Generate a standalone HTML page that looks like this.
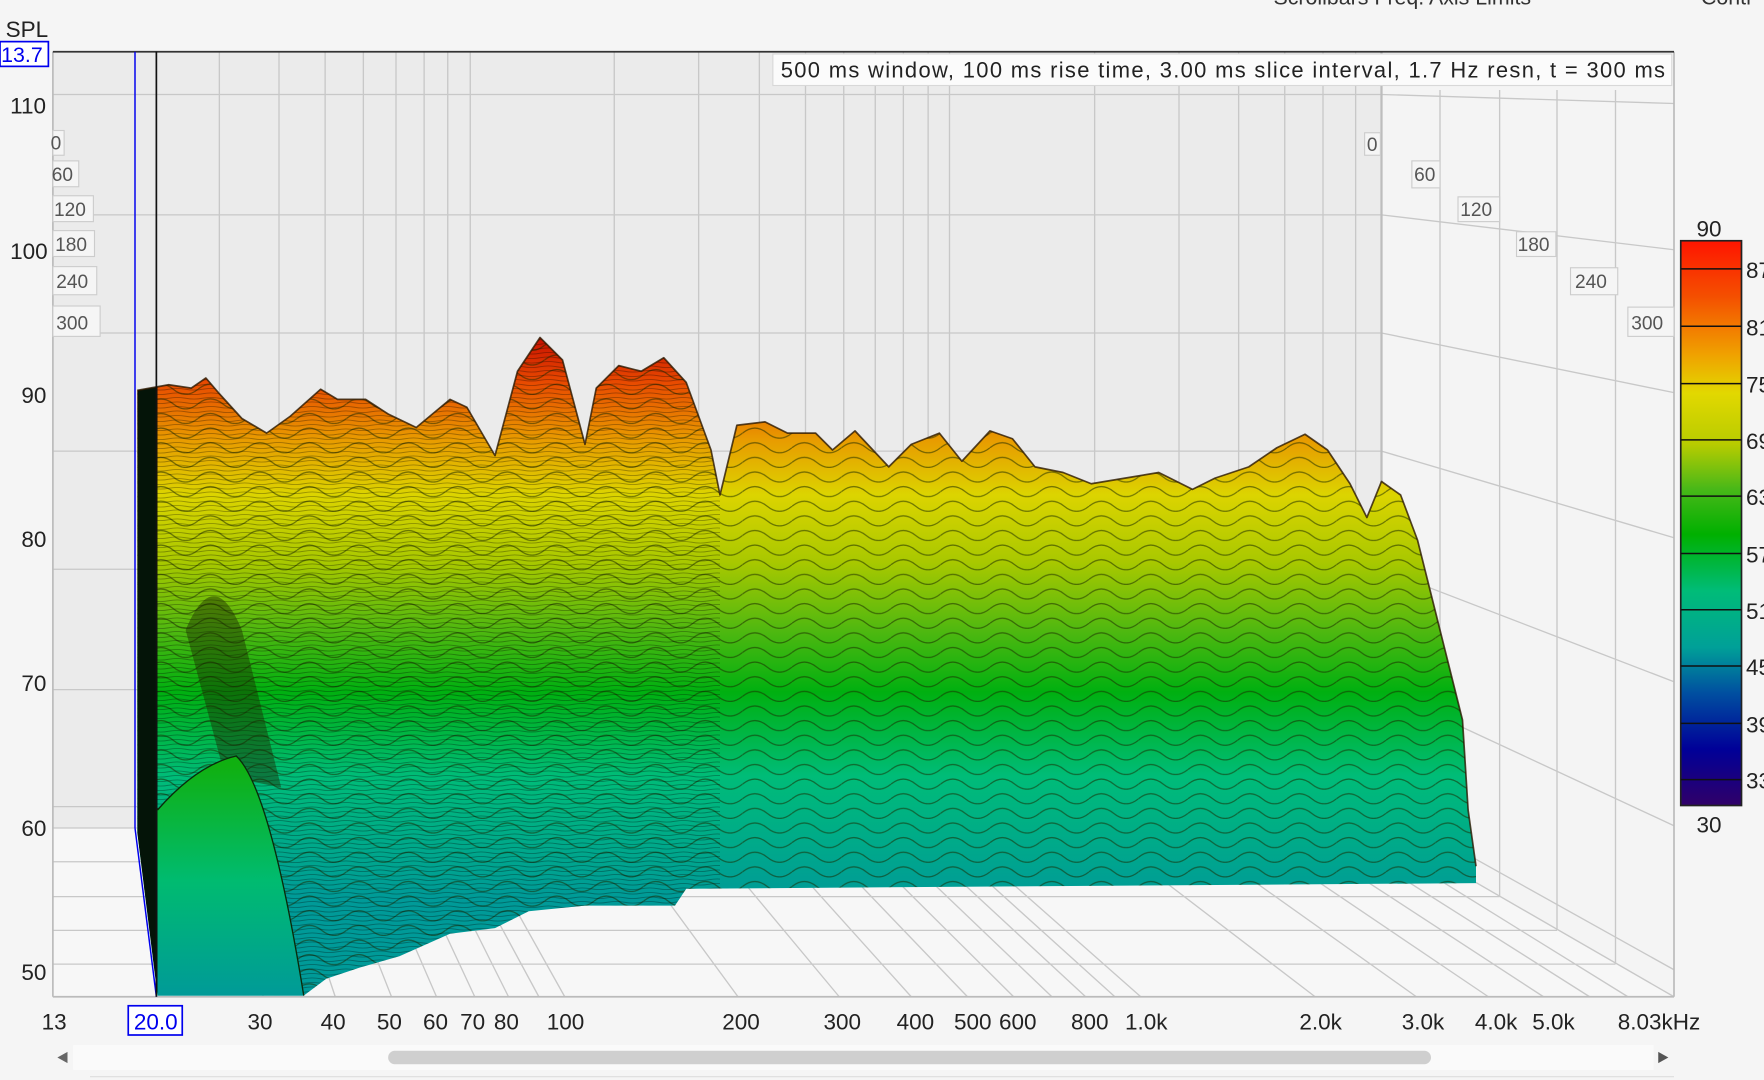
<!DOCTYPE html>
<html><head><meta charset="utf-8"><style>
html,body{margin:0;padding:0;background:#f5f5f5;overflow:hidden}
svg{display:block}
text{font-family:"Liberation Sans",sans-serif}
</style></head><body>
<svg width="1764" height="1080" viewBox="0 0 1568 960" xmlns="http://www.w3.org/2000/svg">
<defs>
<linearGradient id="surf" gradientUnits="userSpaceOnUse" x1="0" y1="300" x2="0" y2="800">
<stop offset="0" stop-color="#c81000"/><stop offset="0.08" stop-color="#e84a00"/>
<stop offset="0.18" stop-color="#e89a00"/><stop offset="0.28" stop-color="#dcd400"/>
<stop offset="0.4" stop-color="#a8c800"/><stop offset="0.52" stop-color="#50b810"/>
<stop offset="0.63" stop-color="#00b010"/><stop offset="0.78" stop-color="#00bc78"/>
<stop offset="1" stop-color="#009a98"/></linearGradient>
<linearGradient id="hill" gradientUnits="userSpaceOnUse" x1="0" y1="680" x2="0" y2="886">
<stop offset="0" stop-color="#10b010"/><stop offset="0.5" stop-color="#00bb70"/><stop offset="1" stop-color="#009a98"/></linearGradient>
<linearGradient id="cb" x1="0" y1="0" x2="0" y2="1">
<stop offset="0" stop-color="#ff1500"/><stop offset="0.1" stop-color="#f45000"/>
<stop offset="0.2" stop-color="#f0a000"/><stop offset="0.27" stop-color="#e2d800"/>
<stop offset="0.36" stop-color="#b8cc00"/><stop offset="0.44" stop-color="#48b818"/>
<stop offset="0.52" stop-color="#00b000"/><stop offset="0.62" stop-color="#00bc78"/>
<stop offset="0.72" stop-color="#00a098"/><stop offset="0.8" stop-color="#0050a0"/>
<stop offset="0.9" stop-color="#000098"/><stop offset="1" stop-color="#300068"/></linearGradient>
<pattern id="wave" patternUnits="userSpaceOnUse" width="44" height="13">
<path d="M0,8 Q11,-1 22,8 T44,8" fill="none" stroke="#1a2a00" stroke-opacity="0.55" stroke-width="1.1"/></pattern>
<pattern id="wave2" patternUnits="userSpaceOnUse" width="30" height="4">
<path d="M0,2 Q7.5,0.5 15,2 T30,2" fill="none" stroke="#000" stroke-opacity="0.5" stroke-width="0.8"/></pattern>
<clipPath id="sil"><path id="silp" d="M122,347 L150,342 L170,345 L183,336 L195,350 L215,372 L237,385 L258,370 L285,346 L300,355 L325,355 L345,368 L370,380 L400,355 L415,362 L440,405 L460,330 L480,300 L500,320 L520,395 L530,345 L550,325 L570,330 L590,318 L610,340 L632,400 L640,440 L655,378 L680,375 L700,385 L725,385 L740,400 L760,383 L790,415 L810,395 L835,385 L855,410 L880,383 L900,390 L920,415 L945,420 L970,430 L1000,425 L1030,420 L1060,435 L1080,425 L1110,415 L1135,398 L1160,386 L1180,400 L1200,430 L1215,460 L1228,428 L1245,440 L1260,480 L1275,540 L1290,600 L1300,640 L1305,720 L1312,770 L1312,785 L610,790 L600,805 L520,805 L470,810 L440,825 L400,830 L355,850 L320,860 L290,870 L270,885 L140,885 L122,740 Z"/></clipPath>
</defs>

<text x="1132" y="4" font-size="19" fill="#333">Scrollbars   Freq. Axis   Limits</text>
<text x="1512" y="4" font-size="19" fill="#333">Contr</text>

<rect x="47" y="46" width="1181" height="690" fill="#ebebeb"/>
<polygon points="1228,46 1488,46 1488,886 1228,736" fill="#f4f4f4"/>
<polygon points="47,736 1228,736 1488,886 47,886" fill="#f7f7f7"/>

<g stroke="#c8c8c8" stroke-width="1.2" fill="none">
<path d="M47,84H1228M47,191H1228M47,296H1228M47,401H1228M47,506H1228M47,613H1228M47,717H1228M47,736H1228"/>
<path d="M1228,84L1488,92M1228,191L1488,222M1228,296L1488,349M1228,401L1488,478M1228,506L1488,606M1228,613L1488,734M1228,717L1488,862"/>
<path d="M47,766H1280M47,797H1333M47,827H1384M47,857H1436M1228,736L1488,886"/>
<path d="M1280,80V766M1333,80V797M1384,80V827M1436,80V857"/>
<path d="M195,46V736M248,46V736M289,46V736M323,46V736M352,46V736M377,46V736M398,46V736M418,46V736M546,46V736M621,46V736M675,46V736M716,46V736M750,46V736M778,46V736M803,46V736M825,46V736M844,46V736M973,46V736M1048,46V736M1101,46V736M1142,46V736M1176,46V736M1205,46V736M1228,46V736"/>
<path d="M195,736L234,886M248,736L298,886M289,736L348,886M323,736L388,886M352,736L422,886M377,736L452,886M398,736L479,886M418,736L502,886M546,736L656,886M621,736L746,886M675,736L810,886M716,736L860,886M750,736L901,886M778,736L935,886M803,736L965,886M825,736L991,886M844,736L1014,886M973,736L1169,886M1048,736L1259,886M1101,736L1323,886M1142,736L1372,886M1176,736L1413,886M1205,736L1447,886"/>
</g>
<line x1="1228" y1="46" x2="1228" y2="736" stroke="#bdbdbd" stroke-width="2"/>
<line x1="1488" y1="46" x2="1488" y2="886" stroke="#bbb" stroke-width="1.5"/>
<line x1="47" y1="46" x2="47" y2="886" stroke="#bbb" stroke-width="1.5"/>
<line x1="47" y1="886" x2="1488" y2="886" stroke="#bbb" stroke-width="1.5"/>
<line x1="47" y1="46" x2="1488" y2="46" stroke="#333" stroke-width="1.5"/>

<use href="#silp" fill="url(#surf)"/>
<g clip-path="url(#sil)">
<rect x="100" y="290" width="1230" height="600" fill="url(#wave)"/>
<rect x="120" y="290" width="520" height="600" fill="url(#wave2)" opacity="0.6"/>
<polygon points="122,330 140,330 140,885 122,740" fill="#041408"/>
<path d="M165,560 Q190,500 215,560 L250,700 L200,690 Z" fill="#1a2a00" opacity="0.45"/>
</g>
<path d="M122,347 L150,342 L170,345 L183,336 L195,350 L215,372 L237,385 L258,370 L285,346 L300,355 L325,355 L345,368 L370,380 L400,355 L415,362 L440,405 L460,330 L480,300 L500,320 L520,395 L530,345 L550,325 L570,330 L590,318 L610,340 L632,400 L640,440 L655,378 L680,375 L700,385 L725,385 L740,400 L760,383 L790,415 L810,395 L835,385 L855,410 L880,383 L900,390 L920,415 L945,420 L970,430 L1000,425 L1030,420 L1060,435 L1080,425 L1110,415 L1135,398 L1160,386 L1180,400 L1200,430 L1215,460 L1228,428 L1245,440 L1260,480 L1275,540 L1290,600 L1300,640 L1305,720 L1312,770" fill="none" stroke="#2a1800" stroke-width="1.5" stroke-linejoin="round" opacity="0.8"/>
<path d="M140,885 L140,720 Q175,680 210,672 Q240,700 270,885 Z" fill="url(#hill)"/>
<path d="M140,720 Q175,680 210,672 Q240,700 270,885" fill="none" stroke="#0a2a0a" stroke-width="1.2"/>

<line x1="120" y1="46" x2="120" y2="736" stroke="#0000ee" stroke-width="1.3"/>
<line x1="120" y1="736" x2="139" y2="886" stroke="#0000ee" stroke-width="1.3"/>
<line x1="139" y1="46" x2="139" y2="886" stroke="#111" stroke-width="1.5"/>

<rect x="687" y="48" width="799" height="28" fill="#fbfbfb" stroke="#d8d8d8"/>
<text x="694" y="69" font-size="19.5" fill="#222" textLength="786">500 ms window, 100 ms rise time, 3.00 ms slice interval, 1.7 Hz resn, t = 300 ms</text>

<g font-size="17" fill="#555" stroke="none">
<rect x="47" y="116" width="10" height="22" fill="#f5f5f5" stroke="#ccc"/><text x="45" y="133">0</text>
<rect x="47" y="143" width="23" height="23" fill="#f5f5f5" stroke="#ccc"/><text x="46" y="161">60</text>
<rect x="47" y="174" width="36" height="23" fill="#f5f5f5" stroke="#ccc"/><text x="48" y="192">120</text>
<rect x="47" y="205" width="37" height="23" fill="#f5f5f5" stroke="#ccc"/><text x="49" y="223">180</text>
<rect x="47" y="237" width="39" height="25" fill="#f5f5f5" stroke="#ccc"/><text x="50" y="256">240</text>
<rect x="47" y="272" width="42" height="27" fill="#f5f5f5" stroke="#ccc"/><text x="50" y="293">300</text>
<rect x="1213" y="118" width="14" height="20" fill="#f5f5f5" stroke="#ccc"/><text x="1215" y="134">0</text>
<rect x="1255" y="143" width="25" height="24" fill="#f5f5f5" stroke="#ccc"/><text x="1257" y="161">60</text>
<rect x="1296" y="175" width="37" height="22" fill="#f5f5f5" stroke="#ccc"/><text x="1298" y="192">120</text>
<rect x="1348" y="206" width="35" height="22" fill="#f5f5f5" stroke="#ccc"/><text x="1349" y="223">180</text>
<rect x="1396" y="238" width="42" height="24" fill="#f5f5f5" stroke="#ccc"/><text x="1400" y="256">240</text>
<rect x="1447" y="273" width="41" height="26" fill="#f5f5f5" stroke="#ccc"/><text x="1450" y="293">300</text>
</g>

<g font-size="20" fill="#222">
<text x="5" y="33">SPL</text>
<text x="9" y="101">110</text><text x="9" y="230">100</text><text x="19" y="358">90</text>
<text x="19" y="486">80</text><text x="19" y="614">70</text><text x="19" y="743">60</text><text x="19" y="871">50</text>
</g>
<rect x="0" y="37" width="43" height="22" fill="#fff" stroke="#0000ee" stroke-width="1.5"/>
<text x="1" y="55" font-size="19" fill="#0000ee">13.7</text>

<g font-size="20" fill="#222">
<text x="37" y="915">13</text><text x="220" y="915">30</text><text x="285" y="915">40</text>
<text x="335" y="915">50</text><text x="376" y="915">60</text><text x="409" y="915">70</text><text x="439" y="915">80</text>
<text x="486" y="915">100</text><text x="642" y="915">200</text><text x="732" y="915">300</text><text x="797" y="915">400</text>
<text x="848" y="915">500</text><text x="888" y="915">600</text><text x="952" y="915">800</text><text x="1000" y="915">1.0k</text>
<text x="1155" y="915">2.0k</text><text x="1246" y="915">3.0k</text><text x="1311" y="915">4.0k</text><text x="1362" y="915">5.0k</text>
<text x="1438" y="915">8.03kHz</text>
</g>
<rect x="114" y="894" width="48" height="26" fill="#fff" stroke="#0000ee" stroke-width="1.5"/>
<text x="119" y="915" font-size="20" fill="#0000ee">20.0</text>

<rect x="1494" y="214" width="54" height="502" fill="url(#cb)" stroke="#222" stroke-width="1.5"/>
<g stroke="#111" stroke-width="1.3">
<path d="M1494,239H1548M1494,290H1548M1494,341H1548M1494,391H1548M1494,441H1548M1494,492H1548M1494,542H1548M1494,592H1548M1494,643H1548M1494,693H1548"/></g>
<g font-size="20" fill="#222">
<text x="1508" y="210">90</text><text x="1508" y="740">30</text>
<text x="1552" y="247">87</text><text x="1552" y="298">81</text><text x="1552" y="349">75</text><text x="1552" y="399">69</text>
<text x="1552" y="449">63</text><text x="1552" y="500">57</text><text x="1552" y="550">51</text><text x="1552" y="600">45</text>
<text x="1552" y="651">39</text><text x="1552" y="701">33</text>
</g>

<rect x="65" y="929" width="1405" height="22" fill="#fafafa"/>
<rect x="345" y="934" width="927" height="12" rx="6" fill="#cfcfcf"/>
<path d="M51,940 L60,935 L60,945 Z" fill="#666"/>
<path d="M1483,940 L1474,935 L1474,945 Z" fill="#555"/>
<line x1="80" y1="957" x2="1488" y2="957" stroke="#ddd"/>
</svg>
</body></html>
